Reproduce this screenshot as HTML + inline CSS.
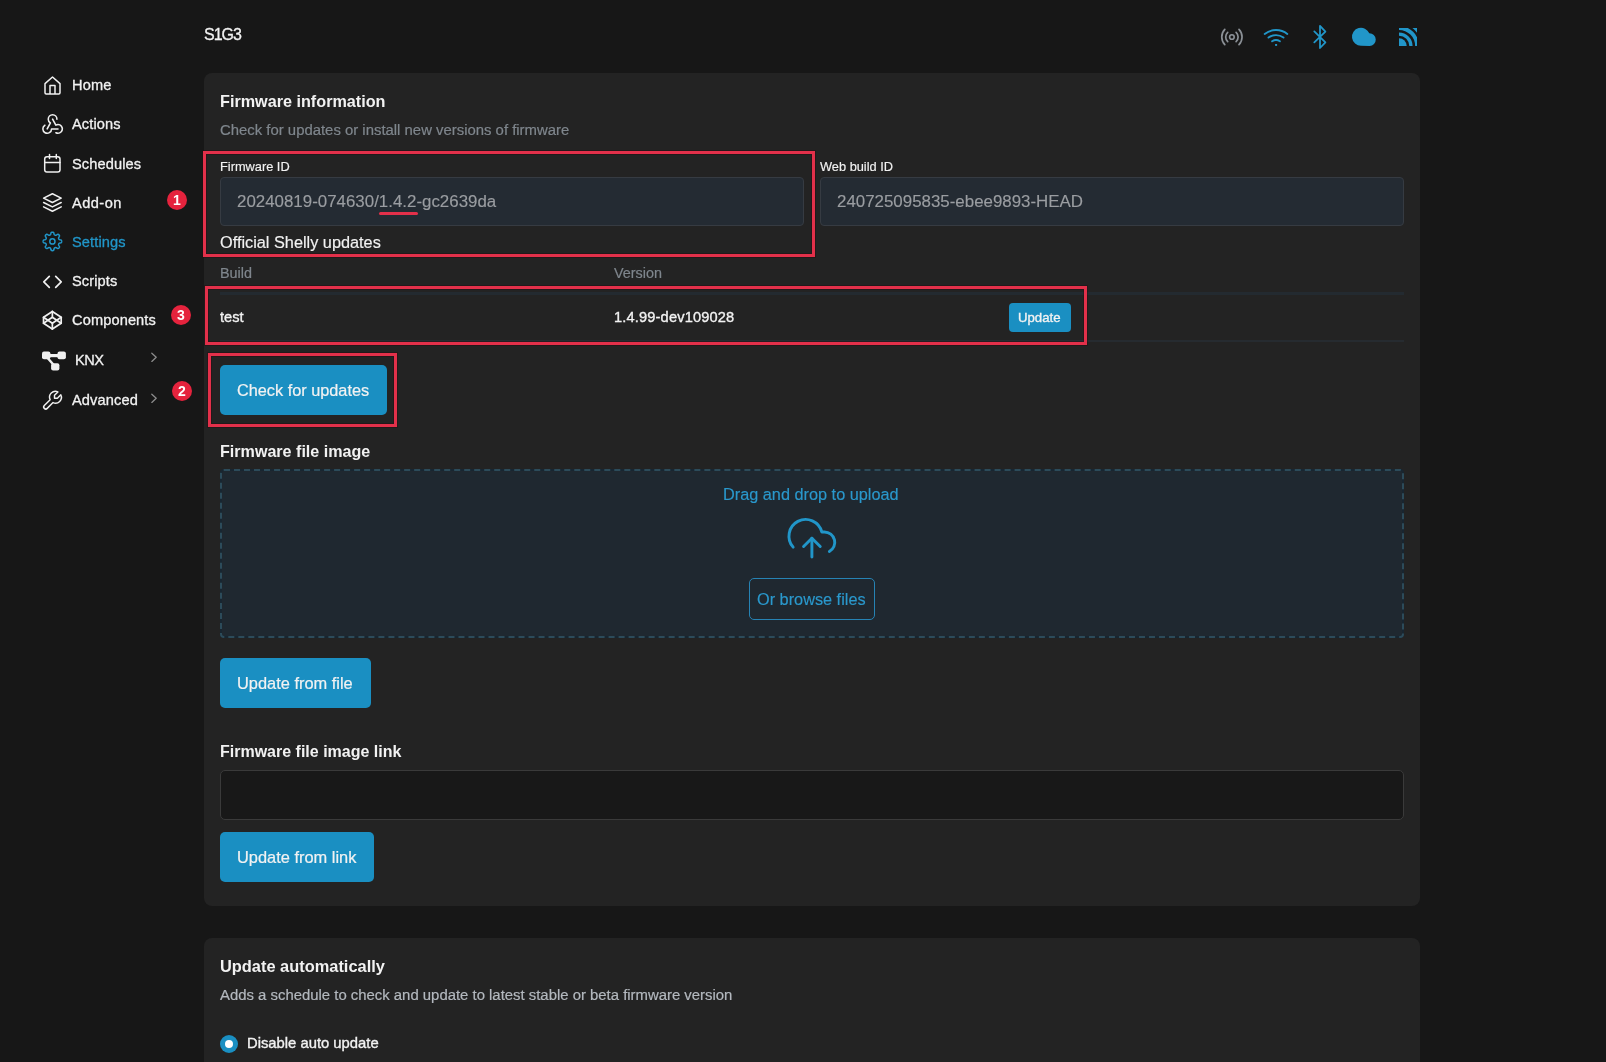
<!DOCTYPE html>
<html><head><meta charset="utf-8"><style>
html,body{margin:0;padding:0;width:1606px;height:1062px;overflow:hidden;background:#171717;font-family:"Liberation Sans",sans-serif;}
.t{position:absolute;white-space:nowrap;will-change:transform;}
.a{position:absolute;box-sizing:border-box;}
svg{position:absolute;overflow:visible;}
</style></head><body>
<!-- cards -->
<div class="a" style="left:204px;top:73px;width:1216px;height:833px;background:#232323;border-radius:8px;"></div>
<div class="a" style="left:204px;top:938px;width:1216px;height:200px;background:#232323;border-radius:8px;"></div>
<!-- inputs -->
<div class="a" style="left:220px;top:176.5px;width:584px;height:49px;background:#242b33;border:1px solid #363b42;border-radius:4px;"></div>
<div class="a" style="left:820px;top:176.5px;width:584px;height:49px;background:#242b33;border:1px solid #363b42;border-radius:4px;"></div>
<!-- table lines -->
<div class="a" style="left:220px;top:292px;width:1184px;height:3px;background:#232a30;"></div>
<div class="a" style="left:220px;top:339.5px;width:1184px;height:2px;background:#262b30;"></div>
<!-- buttons -->
<div class="a" style="left:1009px;top:303px;width:62px;height:29px;background:#1a8fc2;border-radius:4px;"></div>
<div class="a" style="left:220px;top:365px;width:167px;height:50px;background:#1a8fc2;border-radius:5px;"></div>
<div class="a" style="left:220px;top:658px;width:151px;height:50px;background:#1a8fc2;border-radius:5px;"></div>
<div class="a" style="left:220px;top:832px;width:154px;height:50px;background:#1a8fc2;border-radius:5px;"></div>
<!-- dropzone -->
<div class="a" style="left:220px;top:469px;width:1184px;height:169px;background:#1f2830;border:2px solid #182631;border-radius:4px;"></div>
<div class="a" style="left:220px;top:469px;width:1184px;height:169px;border:2px dashed #2c4b5a;border-radius:4px;"></div>
<div class="a" style="left:749px;top:578px;width:126px;height:42px;border:1px solid #2683b4;border-radius:5px;"></div>
<!-- link input -->
<div class="a" style="left:220px;top:770px;width:1184px;height:50px;background:#181818;border:1px solid #3a3a3a;border-radius:5px;"></div>
<!-- radio -->
<div class="a" style="left:220px;top:1035px;width:18px;height:18px;border-radius:50%;background:#1a8fc2;"></div>
<div class="a" style="left:225px;top:1040px;width:8px;height:8px;border-radius:50%;background:#fff;"></div>
<!-- red annotation boxes -->
<div class="a" style="left:203px;top:151px;width:612px;height:106px;border:3px solid #e3304a;box-shadow:0 0 0 1px rgba(40,5,12,.35),inset 0 0 0 1px rgba(40,5,12,.35);"></div>
<div class="a" style="left:204.8px;top:285.8px;width:882.7px;height:59.2px;border:3px solid #e3304a;box-shadow:0 0 0 1px rgba(40,5,12,.35),inset 0 0 0 1px rgba(40,5,12,.35);"></div>
<div class="a" style="left:208px;top:352.5px;width:189px;height:74.5px;border:3px solid #e3304a;box-shadow:0 0 0 1px rgba(40,5,12,.35),inset 0 0 0 1px rgba(40,5,12,.35);"></div>
<div class="a" style="left:379px;top:211.5px;width:39px;height:3px;background:#e3304a;border-radius:2px;"></div>
<!-- badges -->
<div class="a" style="left:167px;top:190px;width:20px;height:20px;border-radius:50%;background:#e5233d;"></div>
<div class="a" style="left:171px;top:305px;width:20px;height:20px;border-radius:50%;background:#e5233d;"></div>
<div class="a" style="left:172px;top:381px;width:20px;height:20px;border-radius:50%;background:#e5233d;"></div>
<div class="t" style="left:167px;top:190px;width:20px;height:20px;line-height:20px;text-align:center;font-size:14px;font-weight:700;color:#fff;">1</div>
<div class="t" style="left:171px;top:305px;width:20px;height:20px;line-height:20px;text-align:center;font-size:14px;font-weight:700;color:#fff;">3</div>
<div class="t" style="left:172px;top:381px;width:20px;height:20px;line-height:20px;text-align:center;font-size:14px;font-weight:700;color:#fff;">2</div>
<div class="t" style="left:204.00px;top:24.35px;font-size:16px;line-height:22px;color:#f2f2f2;letter-spacing:-1.0px;-webkit-text-stroke:0.3px #f2f2f2;">S1G3</div>
<div class="t" style="left:71.90px;top:74.94px;font-size:14.6px;line-height:20px;color:#f2f2f2;letter-spacing:0.12px;-webkit-text-stroke:0.3px #f2f2f2;">Home</div>
<div class="t" style="left:71.90px;top:113.74px;font-size:14.6px;line-height:20px;color:#f2f2f2;letter-spacing:0.12px;-webkit-text-stroke:0.3px #f2f2f2;">Actions</div>
<div class="t" style="left:71.90px;top:153.84px;font-size:14.6px;line-height:20px;color:#f2f2f2;letter-spacing:0.12px;-webkit-text-stroke:0.3px #f2f2f2;">Schedules</div>
<div class="t" style="left:71.90px;top:192.64px;font-size:14.6px;line-height:20px;color:#f2f2f2;letter-spacing:0.45px;-webkit-text-stroke:0.3px #f2f2f2;">Add-on</div>
<div class="t" style="left:71.90px;top:231.94px;font-size:14.6px;line-height:20px;color:#2196c9;letter-spacing:0.12px;-webkit-text-stroke:0.3px #2196c9;">Settings</div>
<div class="t" style="left:71.90px;top:270.74px;font-size:14.6px;line-height:20px;color:#f2f2f2;letter-spacing:0.12px;-webkit-text-stroke:0.3px #f2f2f2;">Scripts</div>
<div class="t" style="left:71.90px;top:309.84px;font-size:14.6px;line-height:20px;color:#f2f2f2;letter-spacing:0.12px;-webkit-text-stroke:0.3px #f2f2f2;">Components</div>
<div class="t" style="left:74.90px;top:349.94px;font-size:14.6px;line-height:20px;color:#f2f2f2;letter-spacing:-0.5px;-webkit-text-stroke:0.3px #f2f2f2;">KNX</div>
<div class="t" style="left:71.90px;top:389.74px;font-size:14.6px;line-height:20px;color:#f2f2f2;letter-spacing:0.12px;-webkit-text-stroke:0.3px #f2f2f2;">Advanced</div>
<div class="t" style="left:220.00px;top:90.08px;font-size:16.2px;line-height:23px;color:#f2f2f2;font-weight:700;">Firmware information</div>
<div class="t" style="left:220.00px;top:119.93px;font-size:14.9px;line-height:21px;color:#7f868d;-webkit-text-stroke:0.2px #7f868d;">Check for updates or install new versions of firmware</div>
<div class="t" style="left:219.90px;top:158.26px;font-size:12.8px;line-height:18px;color:#f2f2f2;-webkit-text-stroke:0.15px #f2f2f2;">Firmware ID</div>
<div class="t" style="left:819.90px;top:158.26px;font-size:12.8px;line-height:18px;color:#f2f2f2;-webkit-text-stroke:0.15px #f2f2f2;">Web build ID</div>
<div class="t" style="left:236.90px;top:190.14px;font-size:16.9px;line-height:24px;color:#9a9da1;-webkit-text-stroke:0.15px #9a9da1;">20240819-074630/1.4.2-gc2639da</div>
<div class="t" style="left:836.90px;top:190.14px;font-size:16.9px;line-height:24px;color:#9a9da1;-webkit-text-stroke:0.15px #9a9da1;">240725095835-ebee9893-HEAD</div>
<div class="t" style="left:219.90px;top:231.25px;font-size:16.3px;line-height:23px;color:#f2f2f2;-webkit-text-stroke:0.15px #f2f2f2;">Official Shelly updates</div>
<div class="t" style="left:219.90px;top:263.01px;font-size:14.4px;line-height:20px;color:#7f868d;-webkit-text-stroke:0.2px #7f868d;">Build</div>
<div class="t" style="left:614.40px;top:263.01px;font-size:14.4px;line-height:20px;color:#7f868d;-webkit-text-stroke:0.2px #7f868d;">Version</div>
<div class="t" style="left:219.70px;top:306.54px;font-size:14.6px;line-height:20px;color:#f2f2f2;-webkit-text-stroke:0.35px #f2f2f2;">test</div>
<div class="t" style="left:614.40px;top:306.54px;font-size:14.6px;line-height:20px;color:#f2f2f2;letter-spacing:0.17px;-webkit-text-stroke:0.35px #f2f2f2;">1.4.99-dev109028</div>
<div class="t" style="left:1018.20px;top:308.62px;font-size:13.2px;line-height:18px;color:#f2f2f2;-webkit-text-stroke:0.35px #f2f2f2;">Update</div>
<div class="t" style="left:237.00px;top:378.55px;font-size:16.3px;line-height:23px;color:#f2f2f2;-webkit-text-stroke:0.2px #f2f2f2;">Check for updates</div>
<div class="t" style="left:220.30px;top:439.72px;font-size:16.1px;line-height:23px;color:#f2f2f2;font-weight:700;">Firmware file image</div>
<div class="t" style="left:723.40px;top:482.85px;font-size:16.3px;line-height:23px;color:#2a98cc;-webkit-text-stroke:0.15px #2a98cc;">Drag and drop to upload</div>
<div class="t" style="left:757.10px;top:588.05px;font-size:16.3px;line-height:23px;color:#2a98cc;-webkit-text-stroke:0.15px #2a98cc;">Or browse files</div>
<div class="t" style="left:237.10px;top:671.61px;font-size:16.4px;line-height:23px;color:#f2f2f2;-webkit-text-stroke:0.2px #f2f2f2;">Update from file</div>
<div class="t" style="left:220.20px;top:741.45px;font-size:16.0px;line-height:22px;color:#f2f2f2;font-weight:700;">Firmware file image link</div>
<div class="t" style="left:236.80px;top:846.01px;font-size:16.4px;line-height:23px;color:#f2f2f2;-webkit-text-stroke:0.2px #f2f2f2;">Update from link</div>
<div class="t" style="left:219.80px;top:954.81px;font-size:16.4px;line-height:23px;color:#f2f2f2;font-weight:700;">Update automatically</div>
<div class="t" style="left:219.80px;top:985.13px;font-size:14.9px;line-height:21px;color:#b3b8be;-webkit-text-stroke:0.2px #b3b8be;">Adds a schedule to check and update to latest stable or beta firmware version</div>
<div class="t" style="left:246.80px;top:1033.07px;font-size:14.8px;line-height:21px;color:#f2f2f2;-webkit-text-stroke:0.35px #f2f2f2;">Disable auto update</div>
<svg style="left:0;top:0" width="1606" height="1062" viewBox="0 0 1606 1062" fill="none" stroke-linecap="round" stroke-linejoin="round">
<!-- home -->
<path d="M45 84V92.8a1.2 1.2 0 0 0 1.2 1.2H58.8a1.2 1.2 0 0 0 1.2-1.2V83.6L52.5 77L45 83.6M50 94V85.5h5V94" stroke="#f0f0f0" stroke-width="1.5"/>
<!-- webhook -->
<g transform="translate(39.6 110.5) scale(1.083)" stroke="#f0f0f0" stroke-width="1.45"><path d="M4.876 13.61a4 4 0 1 0 6.124 3.39h6"/><path d="M15.066 20.502a4 4 0 1 0 1.934 -7.502c-.706 0 -1.424 .179 -2 .5l-3 -5.5"/><path d="M16 8a4 4 0 1 0 -8 0c0 1.506 .77 2.818 2 3.5l-3 5.5"/></g>
<!-- calendar -->
<rect x="44.7" y="156.7" width="15.3" height="15.3" rx="2.3" stroke="#f0f0f0" stroke-width="1.5"/>
<path d="M44.7 162.4H60M49.5 154.6V158.6M56.3 154.6V158.6" stroke="#f0f0f0" stroke-width="1.5"/>
<!-- stack -->
<g transform="translate(39.2 189.3) scale(1.1)" stroke="#f0f0f0" stroke-width="1.4"><path d="M12 4l-8 4l8 4l8 -4l-8 -4"/><path d="M4 12l8 4l8 -4"/><path d="M4 16l8 4l8 -4"/></g>
<!-- gear -->
<path d="M52.40 232.15 L52.64 232.16 L52.88 232.19 L53.12 232.24 L53.35 232.34 L53.57 232.52 L53.76 232.82 L53.91 233.25 L54.02 233.76 L54.13 234.20 L54.25 234.50 L54.39 234.70 L54.54 234.83 L54.69 234.92 L54.86 235.00 L55.02 235.07 L55.19 235.14 L55.36 235.20 L55.54 235.24 L55.74 235.26 L55.97 235.21 L56.27 235.08 L56.66 234.85 L57.09 234.57 L57.51 234.37 L57.85 234.29 L58.13 234.32 L58.37 234.41 L58.57 234.54 L58.76 234.69 L58.94 234.86 L59.11 235.04 L59.26 235.23 L59.39 235.43 L59.48 235.67 L59.51 235.95 L59.43 236.29 L59.23 236.71 L58.95 237.14 L58.72 237.53 L58.59 237.83 L58.54 238.06 L58.56 238.26 L58.60 238.44 L58.66 238.61 L58.73 238.78 L58.80 238.94 L58.88 239.11 L58.97 239.26 L59.10 239.41 L59.30 239.55 L59.60 239.67 L60.04 239.78 L60.55 239.89 L60.98 240.04 L61.28 240.23 L61.46 240.45 L61.56 240.68 L61.61 240.92 L61.64 241.16 L61.65 241.40 L61.64 241.64 L61.61 241.88 L61.56 242.12 L61.46 242.35 L61.28 242.57 L60.98 242.76 L60.55 242.91 L60.04 243.02 L59.60 243.13 L59.30 243.25 L59.10 243.39 L58.97 243.54 L58.88 243.69 L58.80 243.86 L58.73 244.02 L58.66 244.19 L58.60 244.36 L58.56 244.54 L58.54 244.74 L58.59 244.97 L58.72 245.27 L58.95 245.66 L59.23 246.09 L59.43 246.51 L59.51 246.85 L59.48 247.13 L59.39 247.37 L59.26 247.57 L59.11 247.76 L58.94 247.94 L58.76 248.11 L58.57 248.26 L58.37 248.39 L58.13 248.48 L57.85 248.51 L57.51 248.43 L57.09 248.23 L56.66 247.95 L56.27 247.72 L55.97 247.59 L55.74 247.54 L55.54 247.56 L55.36 247.60 L55.19 247.66 L55.02 247.73 L54.86 247.80 L54.69 247.88 L54.54 247.97 L54.39 248.10 L54.25 248.30 L54.13 248.60 L54.02 249.04 L53.91 249.55 L53.76 249.98 L53.57 250.28 L53.35 250.46 L53.12 250.56 L52.88 250.61 L52.64 250.64 L52.40 250.65 L52.16 250.64 L51.92 250.61 L51.68 250.56 L51.45 250.46 L51.23 250.28 L51.04 249.98 L50.89 249.55 L50.78 249.04 L50.67 248.60 L50.55 248.30 L50.41 248.10 L50.26 247.97 L50.11 247.88 L49.94 247.80 L49.78 247.73 L49.61 247.66 L49.44 247.60 L49.26 247.56 L49.06 247.54 L48.83 247.59 L48.53 247.72 L48.14 247.95 L47.71 248.23 L47.29 248.43 L46.95 248.51 L46.67 248.48 L46.43 248.39 L46.23 248.26 L46.04 248.11 L45.86 247.94 L45.69 247.76 L45.54 247.57 L45.41 247.37 L45.32 247.13 L45.29 246.85 L45.37 246.51 L45.57 246.09 L45.85 245.66 L46.08 245.27 L46.21 244.97 L46.26 244.74 L46.24 244.54 L46.20 244.36 L46.14 244.19 L46.07 244.02 L46.00 243.86 L45.92 243.69 L45.83 243.54 L45.70 243.39 L45.50 243.25 L45.20 243.13 L44.76 243.02 L44.25 242.91 L43.82 242.76 L43.52 242.57 L43.34 242.35 L43.24 242.12 L43.19 241.88 L43.16 241.64 L43.15 241.40 L43.16 241.16 L43.19 240.92 L43.24 240.68 L43.34 240.45 L43.52 240.23 L43.82 240.04 L44.25 239.89 L44.76 239.78 L45.20 239.67 L45.50 239.55 L45.70 239.41 L45.83 239.26 L45.92 239.11 L46.00 238.94 L46.07 238.78 L46.14 238.61 L46.20 238.44 L46.24 238.26 L46.26 238.06 L46.21 237.83 L46.08 237.53 L45.85 237.14 L45.57 236.71 L45.37 236.29 L45.29 235.95 L45.32 235.67 L45.41 235.43 L45.54 235.23 L45.69 235.04 L45.86 234.86 L46.04 234.69 L46.23 234.54 L46.43 234.41 L46.67 234.32 L46.95 234.29 L47.29 234.37 L47.71 234.57 L48.14 234.85 L48.53 235.08 L48.83 235.21 L49.06 235.26 L49.26 235.24 L49.44 235.20 L49.61 235.14 L49.78 235.07 L49.94 235.00 L50.11 234.92 L50.26 234.83 L50.41 234.70 L50.55 234.50 L50.67 234.20 L50.78 233.76 L50.89 233.25 L51.04 232.82 L51.23 232.52 L51.45 232.34 L51.68 232.24 L51.92 232.19 L52.16 232.16 L52.40 232.15Z" stroke="#2196c9" stroke-width="1.5"/>
<circle cx="52.4" cy="241.4" r="2.6" stroke="#2196c9" stroke-width="1.5"/>
<!-- code -->
<path d="M49.3 276.3L43.8 281.8L49.3 287.3M55.7 276.3L61.2 281.8L55.7 287.3" stroke="#f0f0f0" stroke-width="1.7"/>
<!-- codepen -->
<g transform="translate(40.6 308.5) scale(0.98)" stroke="#f0f0f0" stroke-width="1.75"><path d="M3 15l9 6l9 -6l-9 -6l-9 6"/><path d="M3 9l9 6l9 -6l-9 -6l-9 6"/><path d="M3 9l0 6"/><path d="M21 9l0 6"/><path d="M12 3l0 6"/><path d="M12 15l0 6"/></g>
<!-- knx -->
<g fill="#f0f0f0" stroke="none"><rect x="42" y="351.5" width="8.4" height="7.8" rx="2"/><rect x="57.5" y="351.5" width="8.4" height="7.8" rx="2"/><rect x="51.1" y="363.2" width="8.3" height="7.2" rx="2"/><rect x="48" y="354" width="12" height="3.2"/></g>
<path d="M47.2 357.5L54.2 365.5" stroke="#f0f0f0" stroke-width="2.4" stroke-linecap="butt"/>
<!-- wrench -->
<g transform="translate(64.2 388.5) scale(-0.97 0.97)" stroke="#f0f0f0" stroke-width="1.5"><path d="M7 10h3v-3l-3.5 -3.5a6 6 0 0 1 8 8l6 6a2 2 0 0 1 -3 3l-6 -6a6 6 0 0 1 -8 -8l3.5 3.5"/></g>
<!-- chevrons -->
<path d="M151.8 353.2L156.2 357.3L151.8 361.4M151.8 394.2L156.2 398.3L151.8 402.4" stroke="#8c8c8c" stroke-width="1.3"/>
<!-- broadcast -->
<circle cx="1231.9" cy="37" r="2.3" stroke="#8b9096" stroke-width="1.6"/>
<path d="M1227.7 32.3A6.5 6.5 0 0 0 1227.7 41.7M1236.1 32.3A6.5 6.5 0 0 1 1236.1 41.7M1224.8 29.4A11 11 0 0 0 1224.8 44.6M1239 29.4A11 11 0 0 1 1239 44.6" stroke="#8b9096" stroke-width="1.7"/>
<!-- wifi -->
<path d="M1264.7 34A18 18 0 0 1 1287.3 34M1268.5 37.6A12.8 12.8 0 0 1 1283.5 37.6M1272.1 41.2A7.8 7.8 0 0 1 1279.9 41.2" stroke="#2196c9" stroke-width="1.9"/>
<rect x="1275.1" y="44" width="2" height="1.9" fill="#2196c9" stroke="none"/>
<!-- bluetooth -->
<path d="M1314.3 31.4L1325.4 42.3L1320 48V25.9L1325.4 31.6L1314.3 42.4" stroke="#2196c9" stroke-width="1.8"/>
<!-- cloud -->
<path d="M1361 45.8A9 9 0 1 1 1369.3 33.3A6.3 6.3 0 1 1 1369.6 45.9Z" fill="#2196c9" stroke="none"/>
<!-- rss corner -->
<defs><clipPath id="rc"><rect x="1399" y="28" width="18" height="18"/></clipPath></defs>
<g clip-path="url(#rc)" stroke="#2196c9" stroke-linecap="butt"><circle cx="1399" cy="46" r="7.7" fill="#2196c9" stroke="none"/><circle cx="1399" cy="46" r="11.95" stroke-width="3.3"/><circle cx="1399" cy="46" r="18.05" stroke-width="3.9"/><circle cx="1399" cy="46" r="26" stroke-width="7.2"/></g>
<!-- upload cloud -->
<g transform="translate(786.9 513.2) scale(2.083)" stroke="#2196c9" stroke-width="1.4"><polyline points="16 16 12 12 8 16"/><line x1="12" y1="12" x2="12" y2="21"/><path d="M20.39 18.39A5 5 0 0 0 18 9h-1.26A8 8 0 1 0 3 16.3"/></g>
</svg>
</body></html>
